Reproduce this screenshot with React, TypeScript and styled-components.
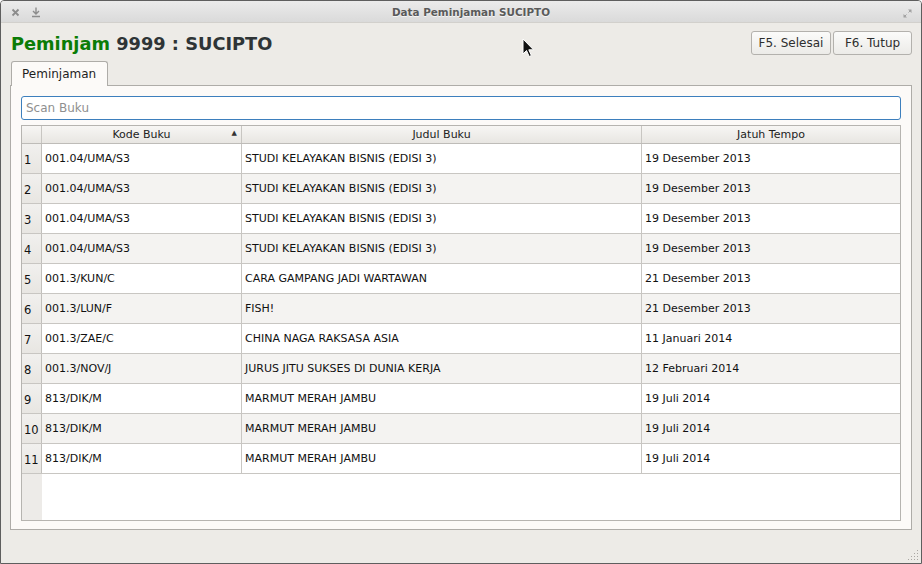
import styled, { createGlobalStyle } from "styled-components";

type Loan = {
  kode: string;
  judul: string;
  tempo: string;
};

const loans: Loan[] = [
  { kode: "001.04/UMA/S3", judul: "STUDI KELAYAKAN BISNIS (EDISI 3)", tempo: "19 Desember 2013" },
  { kode: "001.04/UMA/S3", judul: "STUDI KELAYAKAN BISNIS (EDISI 3)", tempo: "19 Desember 2013" },
  { kode: "001.04/UMA/S3", judul: "STUDI KELAYAKAN BISNIS (EDISI 3)", tempo: "19 Desember 2013" },
  { kode: "001.04/UMA/S3", judul: "STUDI KELAYAKAN BISNIS (EDISI 3)", tempo: "19 Desember 2013" },
  { kode: "001.3/KUN/C", judul: "CARA GAMPANG JADI WARTAWAN", tempo: "21 Desember 2013" },
  { kode: "001.3/LUN/F", judul: "FISH!", tempo: "21 Desember 2013" },
  { kode: "001.3/ZAE/C", judul: "CHINA NAGA RAKSASA ASIA", tempo: "11 Januari 2014" },
  { kode: "001.3/NOV/J", judul: "JURUS JITU SUKSES DI DUNIA KERJA", tempo: "12 Februari 2014" },
  { kode: "813/DIK/M", judul: "MARMUT MERAH JAMBU", tempo: "19 Juli 2014" },
  { kode: "813/DIK/M", judul: "MARMUT MERAH JAMBU", tempo: "19 Juli 2014" },
  { kode: "813/DIK/M", judul: "MARMUT MERAH JAMBU", tempo: "19 Juli 2014" },
];

export default function App() {
  return (
    <>
      <GlobalStyle />
      <Window>
        <TitleBar>
          <TitleIcons>
            <svg width="9" height="9" viewBox="0 0 9 9">
              <path d="M1.5 1.5 L7.5 7.5 M7.5 1.5 L1.5 7.5" stroke="#8c8c8c" strokeWidth="1.8" />
            </svg>
            <svg width="10" height="11" viewBox="0 0 10 11">
              <path d="M5 0.5 V6.5 M2 4 L5 7 L8 4" stroke="#8c8c8c" strokeWidth="1.4" fill="none" />
              <path d="M1 9.5 H9" stroke="#8c8c8c" strokeWidth="1.4" />
            </svg>
          </TitleIcons>
          <TitleText>Data Peminjaman SUCIPTO</TitleText>
          <MaxIcon width="9" height="9" viewBox="0 0 9 9">
            <path d="M5 0.5 H8.5 V4 Z M4 8.5 H0.5 V5 Z" fill="#a0a0a0" />
            <path d="M8 1 L5.5 3.5 M1 8 L3.5 5.5" stroke="#a0a0a0" strokeWidth="1" />
          </MaxIcon>
        </TitleBar>

        <Body>
          <HeaderRow>
            <Heading>
              <Green>Peminjam</Green> 9999 : SUCIPTO
            </Heading>
            <ButtonGroup>
              <ActionButton $width={80}>F5. Selesai</ActionButton>
              <ActionButton $width={79}>F6. Tutup</ActionButton>
            </ButtonGroup>
          </HeaderRow>

          <TabStrip>
            <Tab>Peminjaman</Tab>
          </TabStrip>

          <Panel>
            <SearchInput placeholder="Scan Buku" autoFocus />
            <Table>
              <HeadRow>
                <HeadCell />
                <HeadCell>
                  Kode Buku
                  <SortArrow>▲</SortArrow>
                </HeadCell>
                <HeadCell>Judul Buku</HeadCell>
                <HeadCell $last>Jatuh Tempo</HeadCell>
              </HeadRow>
              {loans.map((loan, index) => (
                <DataRow key={index} $alt={index % 2 === 1}>
                  <RowNumber>{index + 1}</RowNumber>
                  <Cell>{loan.kode}</Cell>
                  <Cell>{loan.judul}</Cell>
                  <Cell $last>{loan.tempo}</Cell>
                </DataRow>
              ))}
              <EmptyArea>
                <EmptyGutter />
                <div />
              </EmptyArea>
            </Table>
          </Panel>
        </Body>

        <Grip width="12" height="12" viewBox="0 0 12 12">
          {[
            [10, 1], [10, 4], [7, 4], [10, 7], [7, 7], [4, 7], [10, 10], [7, 10], [4, 10], [1, 10],
          ].map(([x, y], i) => (
            <rect key={i} x={x} y={y} width="1" height="1" fill="#a9a6a2" />
          ))}
        </Grip>

        <Cursor width="13" height="20" viewBox="0 0 13 20">
          <path
            d="M1 1 L1 16 L4.5 12.5 L7.2 18.5 L9.4 17.5 L6.8 11.8 L11.5 11.8 Z"
            fill="#111"
            stroke="#fff"
            strokeWidth="1"
          />
        </Cursor>
      </Window>
    </>
  );
}

const GlobalStyle = createGlobalStyle`
  html, body {
    margin: 0;
    padding: 0;
    background: #ffffff;
  }

  body {
    font-family: "DejaVu Sans", "Liberation Sans", sans-serif;
  }

  * {
    box-sizing: border-box;
  }
`;

const Window = styled.div`
  position: relative;
  width: 922px;
  height: 564px;
  display: flex;
  flex-direction: column;
  background: #edebe7;
  border: 1px solid #5e5e5e;
  border-radius: 4px 4px 0 0;
  overflow: hidden;
`;

const TitleBar = styled.div`
  position: relative;
  height: 22px;
  flex: 0 0 22px;
  display: flex;
  align-items: center;
  justify-content: center;
  background: linear-gradient(#ebebeb, #dadada);
  border-bottom: 1px solid #d2d0cc;
`;

const TitleIcons = styled.div`
  position: absolute;
  left: 10px;
  top: 6px;
  display: flex;
  align-items: center;
  gap: 11px;
`;

const TitleText = styled.div`
  font-size: 10.4px;
  font-weight: bold;
  color: #5a5a5a;
  text-shadow: 0 1px 0 rgba(255, 255, 255, 0.7);
  margin-left: 20px;
`;

const MaxIcon = styled.svg`
  position: absolute;
  right: 9px;
  top: 8px;
`;

const Body = styled.div`
  flex: 1;
  display: flex;
  flex-direction: column;
  padding: 8px 9px 33px 9px;
`;

const HeaderRow = styled.div`
  height: 24px;
  display: flex;
  align-items: center;
  justify-content: space-between;
`;

const Heading = styled.h1`
  margin: 0 0 0 1px;
  font-size: 17.8px;
  font-weight: bold;
  color: #2e3436;
  white-space: nowrap;
`;

const Green = styled.span`
  color: #0b7c06;
`;

const ButtonGroup = styled.div`
  display: flex;
  gap: 2px;
`;

const ActionButton = styled.button<{ $width: number }>`
  width: ${(p) => p.$width}px;
  height: 24px;
  padding: 0;
  font-family: "DejaVu Sans", sans-serif;
  font-size: 12px;
  color: #2e2e2e;
  background: linear-gradient(#fbfbfa, #ecebe8);
  border: 1px solid #b3b1ad;
  border-radius: 3px;
`;

const TabStrip = styled.div`
  margin-top: 6px;
  padding-left: 1px;
  display: flex;
  position: relative;
  z-index: 1;
  margin-bottom: -1px;
`;

const Tab = styled.div`
  height: 25px;
  padding: 0 11px 0 10px;
  display: flex;
  align-items: center;
  font-size: 12px;
  color: #1e1e1e;
  background: #fcfaf8;
  border: 1px solid #aeaca8;
  border-bottom: none;
  border-radius: 3px 3px 0 0;
`;

const Panel = styled.div`
  flex: 1;
  display: flex;
  flex-direction: column;
  gap: 5px;
  padding: 10px 10px 8px 10px;
  background: #fcfaf8;
  border: 1px solid #aeaca8;
`;

const SearchInput = styled.input`
  height: 24px;
  padding: 0 4px;
  font-family: "DejaVu Sans", sans-serif;
  font-size: 12px;
  color: #222;
  background: #ffffff;
  border: 1px solid #3d7fbd;
  border-radius: 3px;
  outline: none;
  caret-color: #333;

  &::placeholder {
    color: #8f8f8f;
  }
`;

const Table = styled.div`
  flex: 1;
  display: flex;
  flex-direction: column;
  background: #ffffff;
  border: 1px solid #b6b4b0;
  font-size: 11px;
  color: #111;
`;

const columns = "20px 200px 400px 1fr";

const HeadRow = styled.div`
  display: grid;
  grid-template-columns: ${columns};
  height: 18px;
  background: linear-gradient(#f7f6f4, #e8e6e2);
  border-bottom: 1px solid #bebcb8;
`;

const HeadCell = styled.div<{ $last?: boolean }>`
  position: relative;
  display: flex;
  align-items: center;
  justify-content: center;
  color: #222;
  border-right: ${(p) => (p.$last ? "none" : "1px solid #c8c6c2")};
`;

const SortArrow = styled.span`
  position: absolute;
  right: 4px;
  top: 3px;
  font-size: 7px;
  color: #333;
`;

const DataRow = styled.div<{ $alt: boolean }>`
  display: grid;
  grid-template-columns: ${columns};
  height: 30px;
  background: ${(p) => (p.$alt ? "#f4f3f1" : "#ffffff")};
  border-bottom: 1px solid #c8c6c2;
`;

const Cell = styled.div<{ $last?: boolean }>`
  display: flex;
  align-items: center;
  padding-left: 3px;
  white-space: nowrap;
  overflow: hidden;
  border-right: ${(p) => (p.$last ? "none" : "1px solid #c8c6c2")};
`;

const RowNumber = styled.div`
  display: flex;
  align-items: center;
  padding: 3px 0 0 2px;
  font-size: 11.5px;
  background: linear-gradient(#f1f0ee, #e8e6e2);
  border-right: 1px solid #c2c0bc;
`;

const EmptyArea = styled.div`
  flex: 1;
  display: grid;
  grid-template-columns: 20px 1fr;
`;

const EmptyGutter = styled.div`
  background: #edebe8;
`;

const Grip = styled.svg`
  position: absolute;
  right: 2px;
  bottom: 2px;
`;

const Cursor = styled.svg`
  position: absolute;
  left: 521px;
  top: 37px;
`;
